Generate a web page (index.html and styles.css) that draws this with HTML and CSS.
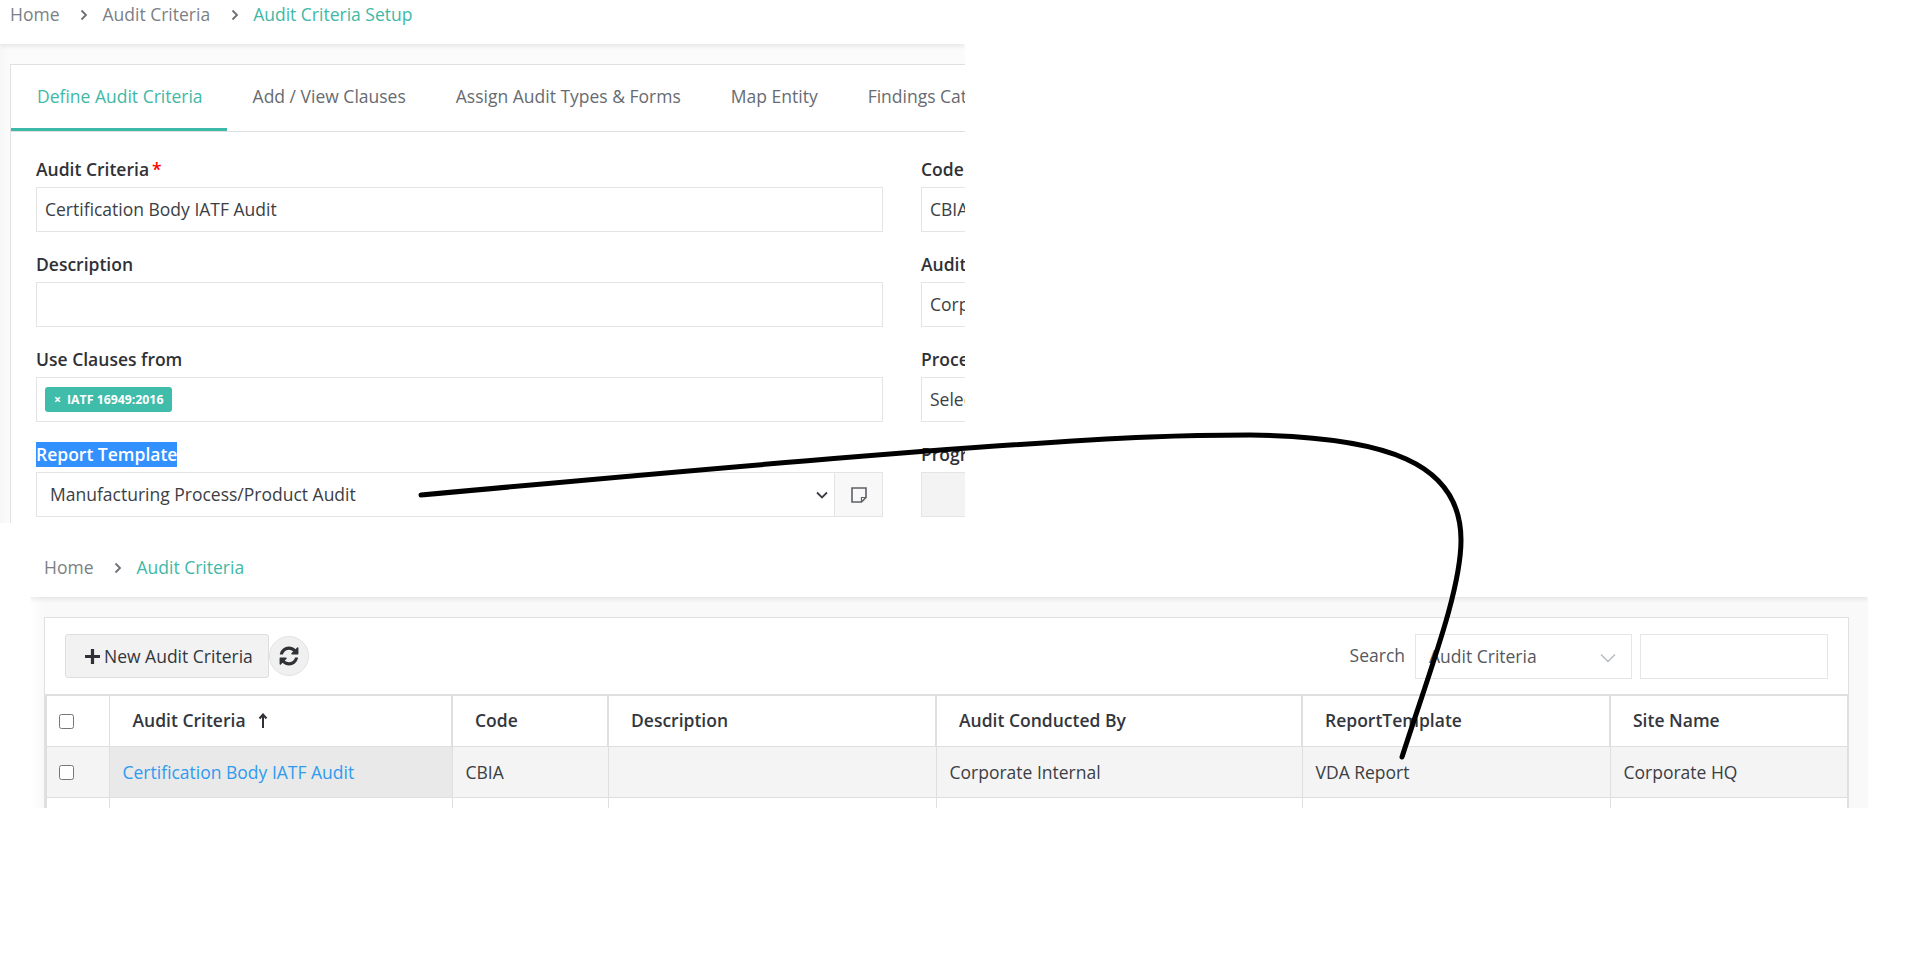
FILE: index.html
```html
<!DOCTYPE html>
<html lang="en">
<head>
<meta charset="utf-8">
<title>Audit Criteria</title>
<link rel="stylesheet" href="styles.css">
</head>
<body>
<section class="shot shot-top">
  <nav class="crumbs crumbs-top">
    <span class="crumb">Home</span>
    <svg class="sep" viewBox="0 0 8 12"><path d="M1.5 1.5 6 6l-4.500 4.500"/></svg>
    <span class="crumb">Audit Criteria</span>
    <svg class="sep" viewBox="0 0 8 12"><path d="M1.500 1.500 6 6l-4.500 4.500"/></svg>
    <span class="crumb current">Audit Criteria Setup</span>
  </nav>
  <div class="card card-top">
    <div class="tabs">
      <span class="tab active">Define Audit Criteria</span>
      <span class="tab">Add / View Clauses</span>
      <span class="tab">Assign Audit Types &amp; Forms</span>
      <span class="tab">Map Entity</span>
      <span class="tab">Findings Categories</span>
    </div>
    <div class="form">
      <div class="group">
        <div class="label">Audit Criteria<span class="req">*</span></div>
        <div class="field">Certification Body IATF Audit</div>
      </div>
      <div class="group">
        <div class="label">Code</div>
        <div class="field">CBIA</div>
      </div>
      <div class="group">
        <div class="label">Description</div>
        <div class="field"></div>
      </div>
      <div class="group">
        <div class="label">Audit Conducted By</div>
        <div class="field field-select">Corporate Internal</div>
      </div>
      <div class="group">
        <div class="label">Use Clauses from</div>
        <div class="field"><span class="tag"><span class="tag-x">×</span>IATF 16949:2016</span></div>
      </div>
      <div class="group">
        <div class="label">Process</div>
        <div class="field field-select">Select</div>
      </div>
      <div class="group">
        <div class="label"><span class="selected">Report Template</span></div>
        <div class="field field-combo">
          <span class="combo-value">Manufacturing Process/Product Audit</span>
          <svg class="chev" viewBox="0 0 12 8"><path d="M1 1.500 6 6.500l5-5"/></svg>
          <span class="addon">
            <svg class="note" viewBox="0 0 16 16"><path d="M1 1h14v9.500L10.500 15H1z"/><path class="fold" d="M15 10.500h-4.500V15"/></svg>
          </span>
        </div>
      </div>
      <div class="group">
        <div class="label">Program</div>
        <div class="field field-disabled"></div>
      </div>
    </div>
  </div>
</section>

<section class="shot shot-bottom">
  <nav class="crumbs crumbs-bottom">
    <span class="crumb">Home</span>
    <svg class="sep" viewBox="0 0 8 12"><path d="M1.500 1.500 6 6l-4.500 4.500"/></svg>
    <span class="crumb current">Audit Criteria</span>
  </nav>
  <div class="card card-bottom">
    <div class="toolbar">
      <button class="btn" type="button">
        <svg class="plus" viewBox="0 0 14 14"><path d="M7 0v14M0 7h14"/></svg>New Audit Criteria
      </button>
      <button class="round" type="button" aria-label="Refresh">
        <svg class="refresh" viewBox="0 0 1792 1792"><path d="M1639 1056q0 5-1 7-64 268-268 434.500t-478 166.500q-146 0-282.500-55t-243.500-157l-129 129q-19 19-45 19t-45-19-19-45v-448q0-26 19-45t45-19h448q26 0 45 19t19 45-19 45l-137 137q71 66 161 102t187 36q134 0 250-65t186-179q11-17 53-117 8-23 30-23h192q13 0 22.500 9.500t9.500 22.500zm25-800v448q0 26-19 45t-45 19h-448q-26 0-45-19t-19-45 19-45l138-138q-148-137-349-137-134 0-250 65t-186 179q-11 17-53 117-8 23-30 23h-199q-13 0-22.500-9.500t-9.500-22.500v-7q65-268 270-434.500t480-166.500q146 0 284 55.500t245 156.500l130-129q19-19 45-19t45 19 19 45z"/></svg>
      </button>
      <span class="search-label">Search</span>
      <div class="search-select">Audit Criteria
        <svg class="chev-light" viewBox="0 0 16 10"><path d="M1 1.500 8 8.500l7-7"/></svg>
      </div>
      <div class="search-input"></div>
    </div>
    <table class="grid">
      <colgroup>
        <col class="c-check"><col class="c-name"><col class="c-code"><col class="c-desc"><col class="c-by"><col class="c-rep"><col>
      </colgroup>
      <thead>
        <tr>
          <th class="check"><input type="checkbox" class="cb"></th>
          <th>Audit Criteria
            <svg class="sort" viewBox="0 0 10 16"><path d="M5 15V2M1.500 5.500 5 1.500l3.500 4"/></svg>
          </th>
          <th>Code</th>
          <th>Description</th>
          <th>Audit Conducted By</th>
          <th>ReportTemplate</th>
          <th>Site Name</th>
        </tr>
      </thead>
      <tbody>
        <tr class="row-hi">
          <td class="check"><input type="checkbox" class="cb"></td>
          <td class="sorted"><a class="link" href="#">Certification Body IATF Audit</a></td>
          <td>CBIA</td>
          <td></td>
          <td>Corporate Internal</td>
          <td>VDA Report</td>
          <td>Corporate HQ</td>
        </tr>
        <tr>
          <td class="check"></td><td></td><td></td><td></td><td></td><td></td><td></td>
        </tr>
      </tbody>
    </table>
  </div>
</section>

<svg class="annotation" viewBox="0 0 1914 953" width="1914" height="953" aria-hidden="true">
  <path d="M421 495C650 474 980 444 1150 437C1185 435.500 1215 435 1250 435C1385 437 1461 462 1461 540C1461 590 1430 670 1402 757"/>
</svg>
</body>
</html>
```
FILE: styles.css
```css
* { box-sizing: border-box; }
html, body { margin: 0; padding: 0; background: #fff; }
body {
  position: relative;
  width: 1914px;
  height: 953px;
  overflow: hidden;
  font-family: "Open Sans", "Noto Sans", sans-serif;
  font-size: 17.5px;
  color: #33373d;
}
.shot { overflow: hidden; background: linear-gradient(90deg, #f7f7f7 0, #fbfbfb 10px); }
.shot-top { width: 965px; height: 523px; }
.shot-bottom {
  width: 1838px;
  height: 258px;
  margin: 27px 0 0 30px;
  background: linear-gradient(90deg, #fff 0, #f9f9f9 14px);
}

.crumbs {
  display: flex;
  align-items: center;
  background: #fff;
  color: #7c7f85;
  box-shadow: 0 2px 5px rgba(0, 0, 0, .09);
}
.crumbs-top { height: 44px; padding: 0 0 17px 10px; }
.crumbs-bottom { height: 47px; padding: 0 0 14px 14px; }
.crumb { line-height: 30px; }
.crumb.current { color: #3fb8a6; }
.sep { width: 8px; height: 12px; margin: 2px 14px 0 21px; fill: none; stroke: #6c6f76; stroke-width: 1.800; }

.card { background: #fff; border: 1px solid #e0e0e0; }
.card-top { margin: 20px 0 0 10px; width: 1400px; height: 500px; }
.card-bottom { margin: 20px 0 0 14px; width: 1805px; height: 300px; }

.tabs { display: flex; height: 67px; border-bottom: 1px solid #e0e0e0; }
.tab { padding: 0 25px; line-height: 63px; color: #676b71; white-space: nowrap; height: 67px; }
.tab:first-child { padding-left: 26px; padding-right: 24px; margin-right: 1px; }
.tab.active { color: #3fb8a6; height: 66px; border-bottom: 3px solid #3cb9a7; }

.form {
  display: grid;
  grid-template-columns: 847px 400px;
  column-gap: 38px;
  padding: 19px 0 0 25px;
}
.group { height: 95px; }
.label {
  height: 36px;
  line-height: 36px;
  font-weight: 600;
  color: #2f3136;
  white-space: nowrap;
}
.req { color: #f00; margin-left: 3px; }
.selected { display: inline-block; height: 25px; line-height: 25px; background: #3390ff; color: #fff; }
.field {
  height: 45px;
  border: 1px solid #e4e4e4;
  padding: 0 8px;
  line-height: 43px;
  background: #fff;
  color: #3b3e44;
  white-space: nowrap;
  overflow: hidden;
}
.field-disabled { background: #f3f3f3; }
.tag {
  display: inline-flex;
  align-items: center;
  height: 25px;
  padding: 0 9px 0 9px;
  margin-top: 9px;
  vertical-align: top;
  background: #3fbcaa;
  border-radius: 3px;
  color: #fff;
  font-size: 12.3px;
  font-weight: 700;
  line-height: 25px;
}
.tag-x { margin-right: 6px; }
.field-combo { display: flex; align-items: center; padding: 0 0 0 13px; }
.combo-value { flex: 1; }
.chev { width: 12px; height: 8px; margin-right: 6px; fill: none; stroke: #3b3e44; stroke-width: 1.800; }
.addon {
  display: flex;
  align-items: center;
  justify-content: center;
  width: 48px;
  height: 100%;
  background: #f8f8f8;
  border-left: 1px solid #e4e4e4;
}
.note { width: 16px; height: 16px; fill: none; stroke: #5d6066; stroke-width: 1.600; }
.note .fold { stroke-width: 1.200; }

.toolbar { display: flex; align-items: center; height: 76px; padding: 0 20px; }
.btn {
  display: flex;
  align-items: center;
  height: 44px;
  width: 204px;
  padding: 0 0 0 19px;
  background: #f2f2f2;
  border: 1px solid #dedede;
  border-radius: 3px;
  color: #33373d;
  font: inherit;
}
.plus { width: 15px; height: 15px; margin-right: 4px; fill: none; stroke: #2f3136; stroke-width: 3; }
.round {
  display: flex;
  align-items: center;
  justify-content: center;
  width: 40px;
  height: 40px;
  padding: 0;
  background: #f0f0f0;
  border: 1px solid #e3e3e3;
  border-radius: 50%;
}
.refresh { width: 22px; height: 22px; fill: #2f3136; }
.search-label { margin-left: auto; margin-right: 10px; padding-bottom: 2px; color: #55585e; }
.search-select {
  position: relative;
  width: 217px;
  height: 45px;
  padding-left: 13px;
  line-height: 43px;
  border: 1px solid #e6e6e6;
  color: #55585e;
}
.chev-light {
  position: absolute;
  right: 15px;
  top: 18px;
  width: 16px;
  height: 10px;
  fill: none;
  stroke: #b5b8bd;
  stroke-width: 1.300;
}
.search-input { width: 188px; height: 45px; margin-left: 8px; border: 1px solid #e6e6e6; }

.grid {
  width: 1803px;
  table-layout: fixed;
  border-collapse: collapse;
  border-top: 2px solid #dfdfdf;
  border-left: 2px solid #dfdfdf;
}
.c-check { width: 63px; }
.c-name { width: 343px; }
.c-code { width: 156px; }
.c-desc { width: 328px; }
.c-by { width: 366px; }
.c-rep { width: 308px; }
.grid th {
  height: 51px;
  padding: 0 0 2px 23px;
  text-align: left;
  font-weight: 600;
  color: #33373d;
  background: #fff;
  border: 1px solid #dfdfdf;
  white-space: nowrap;
}
.grid th + th + th { border-left-width: 2px; padding-left: 22px; }
.grid td {
  height: 51px;
  padding: 0 0 0 13px;
  border: 1px solid #dfdfdf;
  color: #3b3e44;
  white-space: nowrap;
}
.grid .check { padding: 2px 0 0 12px; }
.cb { display: block; width: 15px; height: 15px; margin: 0; }
.row-hi td { background: #f4f4f4; }
.row-hi td.sorted { background: #e9e9e9; }
.link { color: #2f9bef; text-decoration: none; }
.sort { width: 10px; height: 16px; margin-left: 8px; vertical-align: -2px; fill: none; stroke: #2f3136; stroke-width: 2; }

.annotation { position: absolute; left: 0; top: 0; pointer-events: none; }
.annotation path { fill: none; stroke: #000; stroke-width: 5; stroke-linecap: round; stroke-linejoin: round; }
```
